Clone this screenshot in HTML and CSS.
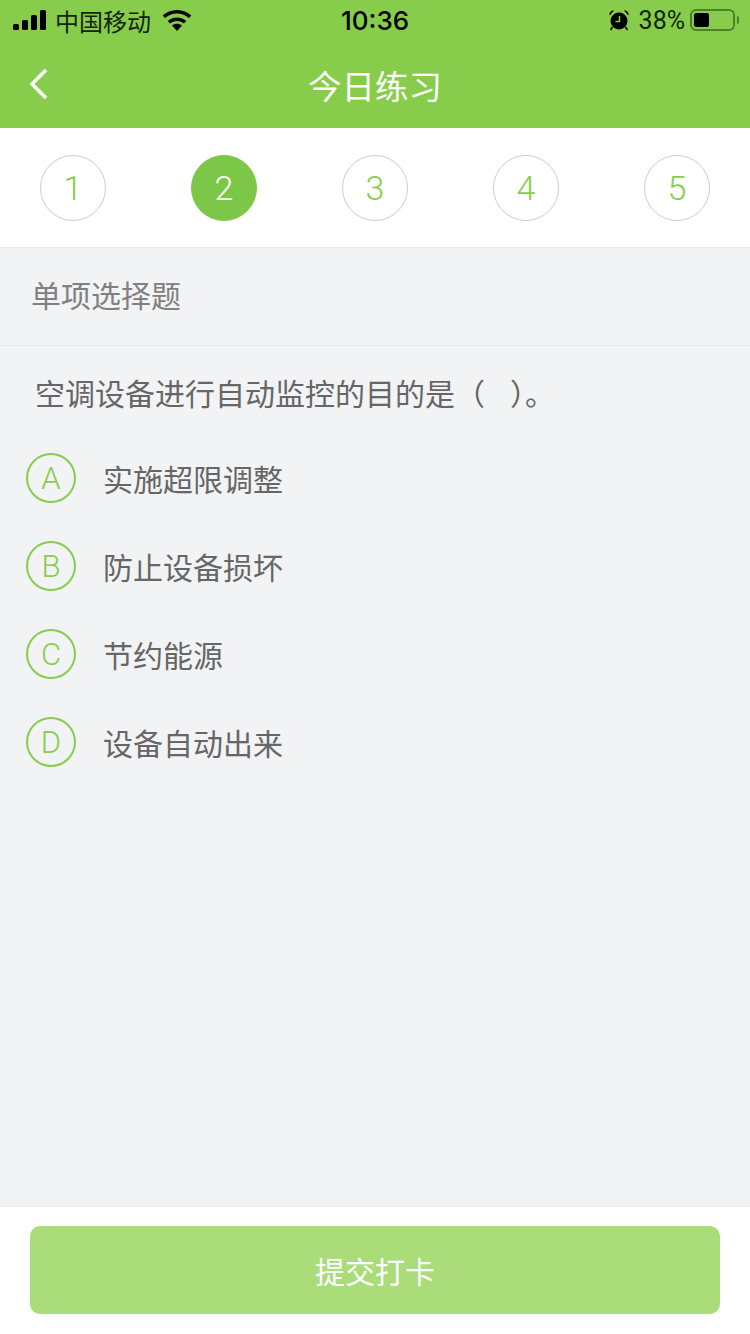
FILE: index.html
```html
<!DOCTYPE html>
<html lang="zh-CN">
<head>
<meta charset="UTF-8">
<meta name="viewport" content="width=device-width, initial-scale=1.0">
<title>今日练习</title>
<link rel="stylesheet" href="styles.css">
</head>
<body>

<div class="top">
  <div class="status">
    <div class="status-left">
      <svg class="signal" width="34" height="20" viewBox="0 0 34 20">
        <rect x="0" y="14" width="6" height="6" rx="1.5"/>
        <rect x="9" y="10" width="6" height="10" rx="1.5"/>
        <rect x="18" y="5" width="6" height="15" rx="1.5"/>
        <rect x="27" y="0" width="6" height="20" rx="1.5"/>
      </svg>
      <span class="carrier">中国移动</span>
      <svg class="wifi" width="30" height="22" viewBox="0 0 30 22">
        <path d="M15 22l-5-5.6c2.9-2.2 7.100-2.200 10 0z"/>
        <path d="M15 8.500c-3.600 0-6.800 1.300-9.200 3.400l2.300 2.500c1.800-1.600 4.200-2.500 6.900-2.500s5.100 .9 6.900 2.500l2.300-2.500c-2.400-2.100-5.600-3.400-9.200-3.400z"/>
        <path d="M15 1C9.400 1 4.400 3.100 .7 6.500L3 9c3.100-2.900 7.300-4.600 12-4.600s8.900 1.700 12 4.600l2.300-2.500C25.600 3.100 20.600 1 15 1z"/>
      </svg>
    </div>
    <div class="clock">10:36</div>
    <div class="status-right">
      <svg class="alarm" width="22" height="22" viewBox="0 0 22 22">
        <path d="M1.500 6.500C1 3.500 3 1 6 1.500z"/>
        <path d="M20.500 6.500C21 3.500 19 1 16 1.500z"/>
        <circle cx="11" cy="12" r="8.500"/>
        <path d="M4.500 18l-2 3M17.500 18l2 3" stroke="#000" stroke-width="1.500"/>
        <path d="M11.500 7v5.500H7.500" fill="none" stroke="#87cd4b" stroke-width="1.500"/>
      </svg>
      <span class="percent">38%</span>
      <div class="battery"><div class="battery-level"></div></div>
      <div class="battery-cap"></div>
    </div>
  </div>
  <div class="navbar">
    <svg class="back" width="20" height="32" viewBox="0 0 20 32">
      <path d="M17 2L3 16l14 14" fill="none" stroke="#fff" stroke-width="3.500"/>
    </svg>
    <div class="nav-title">今日练习</div>
  </div>
</div>

<div class="steps">
  <div class="step">1</div>
  <div class="step active">2</div>
  <div class="step">3</div>
  <div class="step">4</div>
  <div class="step">5</div>
</div>

<div class="main">
  <div class="section-title">单项选择题</div>
  <div class="question">空调设备进行自动监控的目的是（&nbsp;&nbsp;&nbsp;）。</div>
  <div class="option"><div class="letter">A</div><div class="answer">实施超限调整</div></div>
  <div class="option"><div class="letter">B</div><div class="answer">防止设备损坏</div></div>
  <div class="option"><div class="letter">C</div><div class="answer">节约能源</div></div>
  <div class="option"><div class="letter">D</div><div class="answer">设备自动出来</div></div>
</div>

<div class="footer">
  <div class="submit">提交打卡</div>
</div>

</body>
</html>
```

FILE: styles.css
```css
* {
box-sizing: border-box;
}
body {
margin: 0;
width: 750px;
height: 1334px;
display: flex;
flex-direction: column;
overflow: hidden;
background-color: #f2f3f5;
font-family: "Liberation Sans", "Noto Sans CJK SC", sans-serif;
}
.top {
height: 128px;
background-color: #87cd4b;
}
.status {
height: 40px;
padding: 0 11px 0 13px;
display: flex;
align-items: center;
justify-content: space-between;
color: #000;
position: relative;
}
.status svg {
display: block;
}
.status-left, .status-right {
display: flex;
align-items: center;
}
.signal {
margin-right: 8px;
}
.carrier {
font-size: 24px;
margin-right: 11px;
color: #14240a;
}
.clock {
font-size: 26px;
font-weight: 500;
font-family: Inter, "Liberation Sans", sans-serif;
position: absolute;
left: 0;
right: 0;
text-align: center;
}
.alarm {
margin-right: 9px;
}
.percent {
font-size: 25px;
color: #14240a;
margin-right: 5px;
font-family: Roboto, "Liberation Sans", sans-serif;
}
.battery {
width: 45px;
height: 22px;
border: 2px solid #4f7f2b;
border-radius: 6px;
padding: 2px;
}
.battery-level {
width: 15px;
height: 14px;
background-color: #000;
border-radius: 2px;
}
.battery-cap {
width: 2px;
height: 8px;
margin-left: 2px;
background-color: #4f7f2b;
border-radius: 0 2px 2px 0;
}
.navbar {
height: 88px;
display: flex;
align-items: center;
justify-content: center;
position: relative;
}
.back {
position: absolute;
left: 29px;
top: 28px;
}
.nav-title {
font-size: 33.5px;
color: #fff;
margin-top: 0;
}
.steps {
height: 120px;
flex: none;
padding: 27px 40px 0;
display: flex;
justify-content: space-between;
background-color: #fff;
border-bottom: 1px solid #e6e7e9;
}
.step {
width: 66px;
height: 66px;
border: 1px solid #cccccc;
border-radius: 50%;
display: flex;
align-items: center;
justify-content: center;
font-size: 34px;
color: #87cd4b;
font-family: Roboto, "Liberation Sans", sans-serif;
font-weight: 300;
}
.step.active {
background-color: #7cc748;
border-color: #7cc748;
color: #fff;
}
.main {
flex: 1;
}
.section-title {
height: 98px;
padding: 0 0 0 31px;
display: flex;
align-items: center;
font-size: 30px;
color: #808080;
border-bottom: 1px solid #e6e7e9;
padding-bottom: 6px;
}
.question {
height: 88px;
padding: 0 0 0 35px;
font-size: 30px;
line-height: 98px;
color: #666;
white-space: nowrap;
}
.option {
height: 88px;
display: flex;
align-items: center;
padding-left: 26px;
}
.letter {
width: 50px;
height: 50px;
border: 2px solid #87cd4b;
border-radius: 50%;
display: flex;
align-items: center;
justify-content: center;
font-size: 31px;
color: #87cd4b;
font-family: Roboto, "Liberation Sans", sans-serif;
font-weight: 300;
}
.answer {
margin-left: 27px;
font-size: 30px;
color: #666;
}
.footer {
height: 128px;
flex: none;
padding: 19px 30px 0;
background-color: #fff;
border-top: 1px solid #e6e7e9;
}
.submit {
height: 88px;
background-color: #aadc7a;
border-radius: 10px;
display: flex;
align-items: center;
justify-content: center;
font-size: 30px;
color: #fff;
}
```
